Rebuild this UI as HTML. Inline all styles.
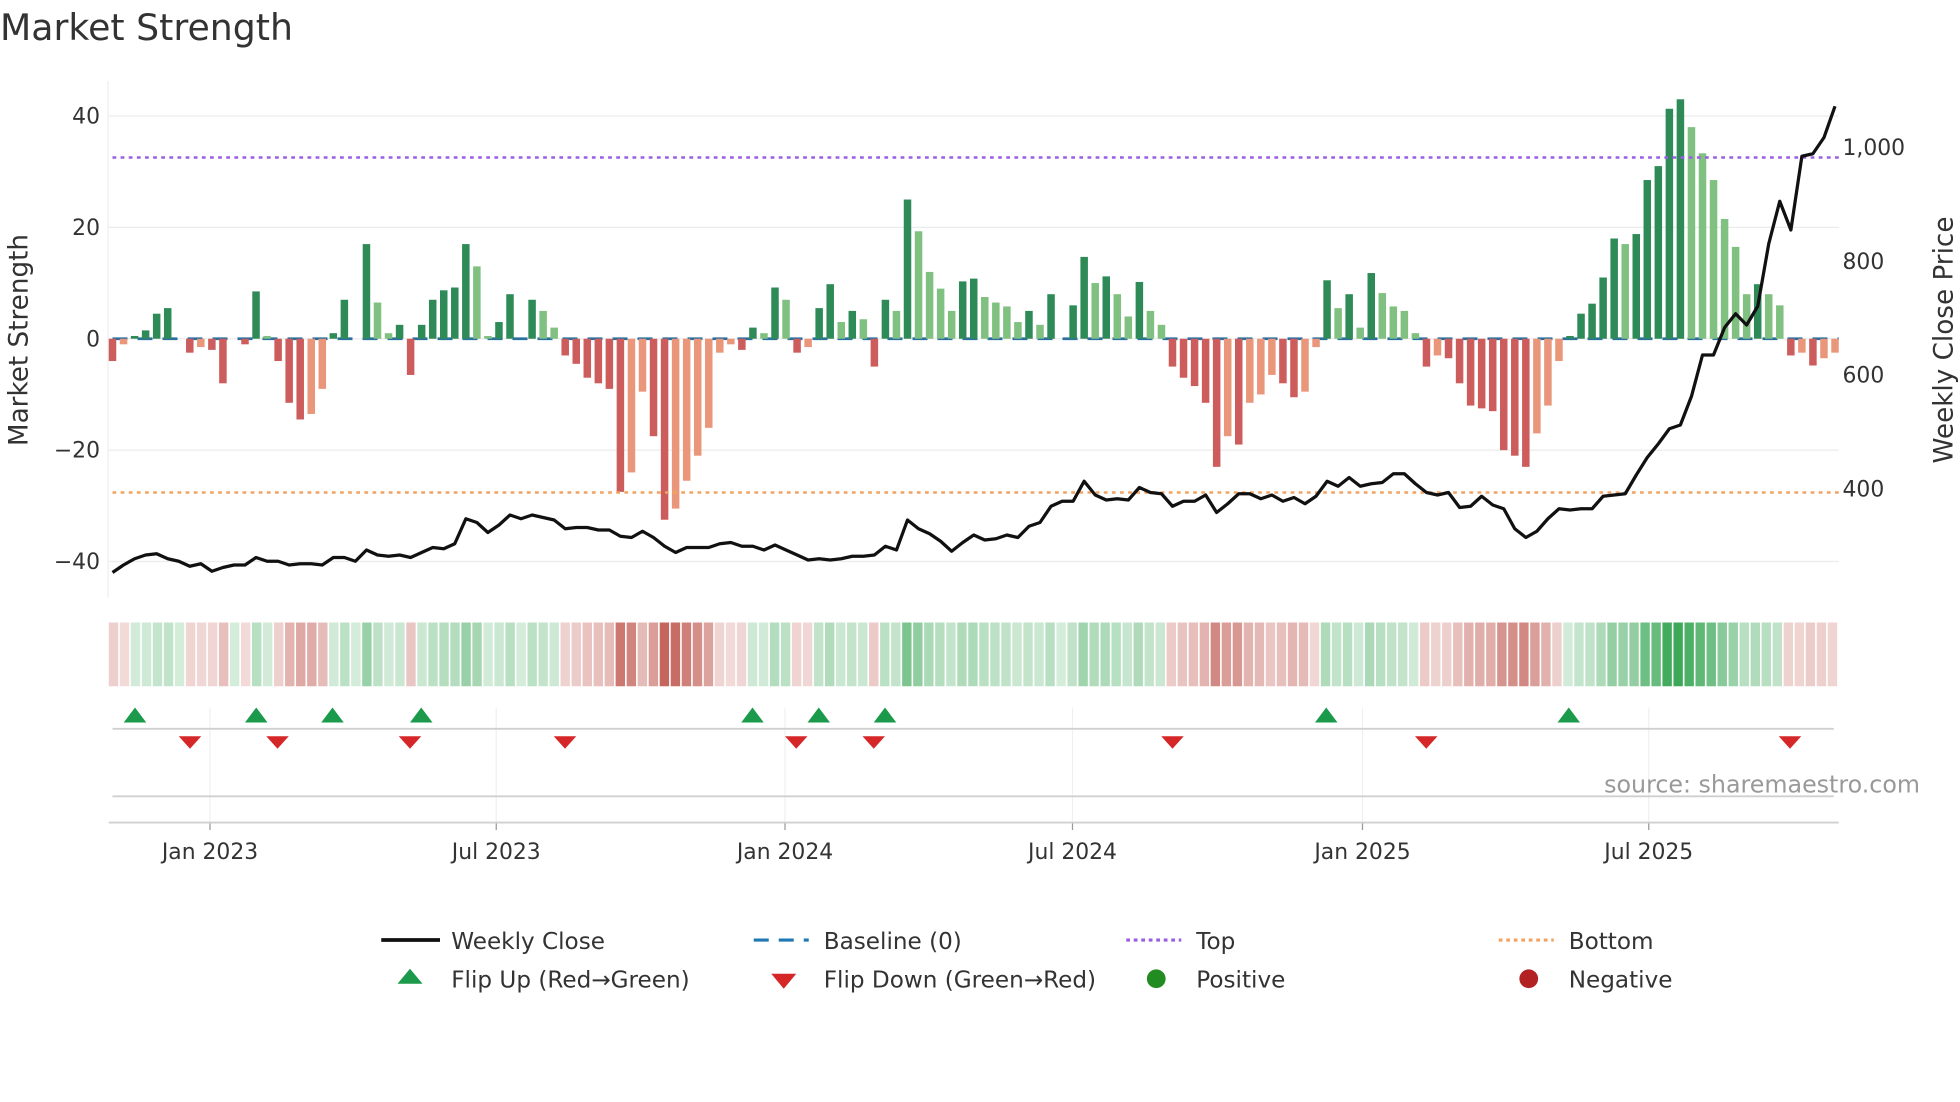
<!DOCTYPE html>
<html><head><meta charset="utf-8"><style>
html,body{margin:0;padding:0;background:#fff;}
svg{display:block;}
text{font-family:"DejaVu Sans","Liberation Sans",sans-serif;}
</style></head><body>
<svg id="s" width="1960" height="1102" viewBox="0 0 1568 881.6" xmlns="http://www.w3.org/2000/svg">
<rect width="1568" height="882" fill="#fff"/>
<text x="0" y="32" font-size="29" fill="#333">Market Strength</text>
<g id="grid"></g>
<g id="bars"></g>
<g id="heat"></g>
<g id="marks"></g>
<text x="22" y="272" font-size="21" fill="#333" text-anchor="middle" transform="rotate(-90 22 272)">Market Strength</text>
<text x="1562" y="272" font-size="21" fill="#333" text-anchor="middle" transform="rotate(-90 1562 272)">Weekly Close Price</text>
<text x="1536" y="634" font-size="19" fill="#999" text-anchor="end">source: sharemaestro.com</text>
<g font-size="18.5" fill="#333">
<line x1="305" y1="752" x2="352" y2="752" stroke="#111" stroke-width="3"/>
<text x="361" y="759">Weekly Close</text>
<line x1="603" y1="752" x2="647" y2="752" stroke="#1f77b4" stroke-width="2.5" stroke-dasharray="12,8"/>
<text x="659" y="759">Baseline (0)</text>
<line x1="901" y1="752" x2="945" y2="752" stroke="#9b5de5" stroke-width="2.5" stroke-dasharray="3,3"/>
<text x="957" y="759">Top</text>
<line x1="1199" y1="752" x2="1243" y2="752" stroke="#f4a261" stroke-width="2.5" stroke-dasharray="3,3"/>
<text x="1255" y="759">Bottom</text>
<polygon points="328,775 338,787 318,787" fill="#1a9a4a"/>
<text x="361" y="790">Flip Up (Red→Green)</text>
<polygon points="617,779 637,779 627,791" fill="#d62728"/>
<text x="659" y="790">Flip Down (Green→Red)</text>
<circle cx="925" cy="783" r="7.5" fill="#228b22"/>
<text x="957" y="790">Positive</text>
<circle cx="1223" cy="783" r="7.5" fill="#b22222"/>
<text x="1255" y="790">Negative</text>
</g>
</svg>
<script>
var NS="http://www.w3.org/2000/svg";
function el(p,t,a,txt){var e=document.createElementNS(NS,t);for(var k in a)e.setAttribute(k,a[k]);if(txt!==undefined)e.textContent=txt;document.getElementById(p).appendChild(e);return e;}
var V=[-4,-1,0.5,1.5,4.5,5.5,0,-2.5,-1.5,-2,-8,0,-1,8.5,0.5,-4,-11.5,-14.5,-13.5,-9,1,7,0,17,6.5,1,2.5,-6.5,2.5,7,8.7,9.2,17,13,0.5,3,8,0,7,5,2,-3,-4.5,-7,-8,-9,-27.5,-24,-9.5,-17.5,-32.5,-30.5,-25.5,-21,-16,-2.5,-1,-2,2,1,9.2,7,-2.5,-1.5,5.5,9.8,3,5,3.5,-5,7,5,25,19.3,12,9,5,10.3,10.8,7.5,6.5,5.8,3,5,2.5,8,0,6,14.7,10,11.2,8,4,10.2,5,2.5,-5,-7,-8.5,-11.5,-23,-17.5,-19,-11.5,-10,-6.5,-8,-10.5,-9.5,-1.5,10.5,5.5,8,2,11.8,8.2,5.8,5,1,-5,-3,-3.5,-8,-12,-12.5,-13,-20,-21,-23,-17,-12,-4,0.5,4.5,6.3,11,18,17,18.8,28.5,31,41.3,43,38,33.3,28.5,21.5,16.5,8,9.8,8,6,-3,-2.5,-4.8,-3.5,-2.5];
var P=[458,452,447,444,443,447,449,453,451,457,454,452,452,446,449,449,452,451,451,452,446,446,449,440,444,445,444,446,442,438,439,435,415,418,426,420,412,415,412,414,416,423,422,422,424,424,429,430,425,430,437,442,438,438,438,435,434,437,437,440,436,440,444,448,447,448,447,445,445,444,437,440,416,423,427,433,441,434,428,432,431,428,430,421,418,405,401,401,385,396,400,399,400,390,394,395,405,401,401,396,410,403,395,395,399,396,401,398,403,397,385,389,382,389,387,386,379,379,387,394,396,394,406,405,397,404,407,423,430,425,415,407,408,407,407,397,396,395,380,366,355,343,340,317,284,284,262,251,260,245,195,161,184,125,123,110,85];
var X0=90,DX=(1468-90)/(V.length-1);
function y(v){return 271-v*4.455;}
[40,20,0,-20,-40].forEach(function(v){el("grid","line",{x1:87,x2:1471,y1:y(v),y2:y(v),stroke:"#ececec","stroke-width":1});
el("grid","text",{x:80,y:y(v)+6,"font-size":17.5,fill:"#333","text-anchor":"end"},(v<0?"\u2212"+(-v):""+v));});
el("grid","line",{x1:86.5,x2:86.5,y1:65,y2:478,stroke:"#eee","stroke-width":1});
[[1000,118],[800,209],[600,300],[400,391]].forEach(function(a){el("grid","text",{x:1474,y:a[1]+6,"font-size":17.5,fill:"#333"},a[0]==1000?"1,000":""+a[0]);});
el("grid","line",{x1:90,x2:1471,y1:271,y2:271,stroke:"#2b6f9e","stroke-width":2.2,"stroke-dasharray":"12,8"});
for(var i=0;i<V.length;i++){var v=V[i],pv=i?V[i-1]:0,x=X0+i*DX,c;
if(v>=0)c=(v>=pv)?"#2e8b57":"#80c080";else c=(v<=pv)?"#cd5c5c":"#e9967a";
if(Math.abs(v)<0.2)continue;
var y1=y(Math.max(v,0)),y2=y(Math.min(v,0));
el("bars","rect",{x:x-3,y:y1,width:6,height:Math.max(y2-y1,1),fill:c});}
el("bars","line",{x1:90,x2:1471,y1:126,y2:126,stroke:"#9b5de5","stroke-width":2,"stroke-dasharray":"3,3.5"});
el("bars","line",{x1:90,x2:1471,y1:394,y2:394,stroke:"#f4a261","stroke-width":2,"stroke-dasharray":"3,3.5"});
var d="";for(var i=0;i<P.length;i++)d+=(i?"L":"M")+(X0+i*DX).toFixed(1)+","+P[i];
el("bars","path",{d:d,fill:"none",stroke:"#111","stroke-width":2.6,"stroke-linejoin":"round"});
for(var i=0;i<V.length;i++){var v=V[i],x=87+i*(1471-87)/V.length,w=(1471-87)/V.length-1.3,col;
if(v>=0){var t=0.22+0.78*Math.min(v/43,1);col="rgba(60,168,88,"+t.toFixed(2)+")";}
else{var t=0.22+0.78*Math.min(-v/33,1);col="rgba(196,100,92,"+t.toFixed(2)+")";}
el("heat","rect",{x:x,y:498,width:w,height:51,fill:col});}
[[168,"Jan 2023"],[397,"Jul 2023"],[628,"Jan 2024"],[858,"Jul 2024"],[1090,"Jan 2025"],[1319,"Jul 2025"]].forEach(function(a){
el("marks","line",{x1:a[0],x2:a[0],y1:566,y2:658,stroke:"#eef0f2","stroke-width":1});
el("marks","line",{x1:a[0],x2:a[0],y1:658,y2:664,stroke:"#999","stroke-width":1});
el("marks","text",{x:a[0],y:687,"font-size":17.5,fill:"#333","text-anchor":"middle"},a[1]);});
el("marks","line",{x1:90,x2:1467,y1:583,y2:583,stroke:"#d0d0d0","stroke-width":1.5});
el("marks","line",{x1:90,x2:1467,y1:637,y2:637,stroke:"#d0d0d0","stroke-width":1.5});
el("marks","line",{x1:87,x2:1471,y1:658,y2:658,stroke:"#d0d0d0","stroke-width":1.5});
[108,205,266,337,602,655,708,1061,1255].forEach(function(x){el("marks","polygon",{points:x+",566 "+(x+9)+",578 "+(x-9)+",578",fill:"#1a9a4a"});});
[152,222,328,452,637,699,938,1141,1432].forEach(function(x){el("marks","polygon",{points:(x-9)+",589 "+(x+9)+",589 "+x+",599",fill:"#d62728"});});
</script>
</body></html>
